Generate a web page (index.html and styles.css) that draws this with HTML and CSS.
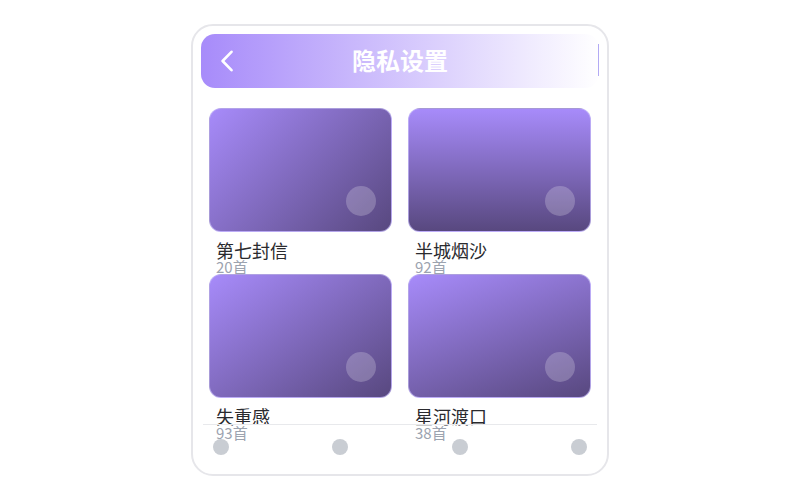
FILE: index.html
```html
<!DOCTYPE html>
<html lang="zh-CN">
<head>
<meta charset="utf-8">
<title>隐私设置</title>
<link rel="stylesheet" href="styles.css">
</head>
<body>
<div class="phone">
  <header class="header">
    <div class="back">
      <svg width="14" height="22" viewBox="0 0 14 22"><path d="M11.5 1.8 L2.6 11 L11.5 20.2" fill="none" stroke="#fff" stroke-width="2.6" stroke-linecap="round" stroke-linejoin="round"/></svg>
    </div>
    <h1 class="title">隐私设置</h1>
    <div class="side"></div>
  </header>
  <main class="grid">
    <div class="item">
      <div class="cover cover-a"><span class="dot"></span></div>
      <div class="name">第七封信</div>
      <div class="count">20首</div>
    </div>
    <div class="item">
      <div class="cover cover-b"><span class="dot"></span></div>
      <div class="name">半城烟沙</div>
      <div class="count">92首</div>
    </div>
    <div class="item">
      <div class="cover cover-c"><span class="dot"></span></div>
      <div class="name">失重感</div>
      <div class="count">93首</div>
    </div>
    <div class="item">
      <div class="cover cover-d"><span class="dot"></span></div>
      <div class="name">星河渡口</div>
      <div class="count">38首</div>
    </div>
  </main>
  <nav class="tabbar">
    <span class="tab"></span>
    <span class="tab"></span>
    <span class="tab"></span>
    <span class="tab"></span>
  </nav>
</div>
</body>
</html>
```

FILE: styles.css
```css
* { box-sizing: border-box; }
html, body { margin: 0; padding: 0; background: #fff; }
body {
  font-family: "Noto Sans CJK SC", "Noto Sans", sans-serif;
}
.phone {
  position: relative;
  width: 418px;
  height: 452px;
  margin: 24px auto 0;
  border: 2px solid #e6e6ea;
  border-radius: 22px;
  padding: 8px;
  background: #fff;
}
.header {
  height: 54px;
  border-radius: 14px;
  background: linear-gradient(90deg, #a78bfa 0%, #ffffff 100%);
  display: flex;
  align-items: center;
  padding: 0 0 0 12px;
}
.back {
  width: 28px;
  height: 32px;
  display: flex;
  align-items: center;
  justify-content: center;
}
.back svg { display: block; }
.title {
  flex: 1;
  margin: 0 0 2px;
  text-align: center;
  color: #fff;
  font-size: 24px;
  font-weight: 700;
  line-height: 32px;
  padding-right: 12px;
}
.side {
  width: 28px;
  height: 32px;
  border-right: 1px solid #b3aaf4;
  margin-bottom: 2px;
}
.grid {
  display: grid;
  grid-template-columns: 183px 183px;
  column-gap: 16px;
  row-gap: 0;
  padding: 20px 8px 0;
}
.item { display: flex; flex-direction: column; }
.cover {
  position: relative;
  height: 124px;
  border-radius: 12px;
  border: 1px solid rgba(200, 188, 250, 0.7);
}
.cover-a { background: linear-gradient(135deg, #a78bfa 0%, #58487f 100%); }
.cover-b { background: linear-gradient(180deg, #a78bfa 0%, #58487f 100%); }
.cover-c { background: linear-gradient(145deg, #a78bfa 0%, #58487f 100%); }
.cover-d { background: linear-gradient(160deg, #a78bfa 0%, #58487f 100%); }
.dot {
  position: absolute;
  right: 15px;
  bottom: 15px;
  width: 30px;
  height: 30px;
  border-radius: 50%;
  background: rgba(255, 255, 255, 0.22);
}
.name {
  margin-top: 9px;
  padding-left: 7px;
  font-size: 18px;
  line-height: 18px;
  color: #2a2a2e;
}
.count {
  padding-left: 7px;
  font-size: 15px;
  line-height: 15px;
  color: #9ca3af;
}
.tabbar {
  position: absolute;
  left: 10px;
  right: 10px;
  bottom: 6px;
  height: 44px;
  border-top: 1px solid #e8e9ec;
  display: flex;
  align-items: center;
  justify-content: space-between;
  padding: 0 10px;
}
.tab {
  width: 16px;
  height: 16px;
  border-radius: 50%;
  background: #c9cdd3;
}
```
